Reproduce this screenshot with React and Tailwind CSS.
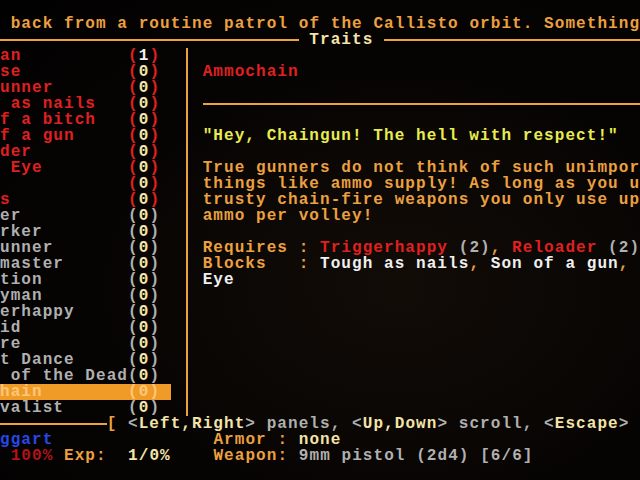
import React from "react";

const RED = "text-[#e02020]";
const ORANGE = "text-[#eca040]";
const CREAM = "text-[#f4e4a8]";
const GRAY = "text-[#b0b0b0]";
const WHITE = "text-[#f0f0f0]";

// visible part of each trait name (list is scrolled off the left edge)
const traits = [
  { name: "an", n: 1, red: true },
  { name: "se", n: 0, red: true },
  { name: "unner", n: 0, red: true },
  { name: " as nails", n: 0, red: true },
  { name: "f a bitch", n: 0, red: true },
  { name: "f a gun", n: 0, red: true },
  { name: "der", n: 0, red: true },
  { name: " Eye", n: 0, red: true },
  { name: "", n: 0, red: true },
  { name: "s", n: 0, red: true },
  { name: "er", n: 0 },
  { name: "rker", n: 0 },
  { name: "unner", n: 0 },
  { name: "master", n: 0 },
  { name: "tion", n: 0 },
  { name: "yman", n: 0 },
  { name: "erhappy", n: 0 },
  { name: "id", n: 0 },
  { name: "re", n: 0 },
  { name: "t Dance", n: 0 },
  { name: " of the Dead", n: 0 },
  { name: "hain", n: 0, active: true },
  { name: "valist", n: 0 },
];

const TraitRow = ({ t }) => {
  if (t.active) {
    return (
      <div className="h-4 bg-[#f09a28] text-[#fcc878]">
        {t.name.padEnd(12)}({t.n})
      </div>
    );
  }
  const c = t.red ? RED : GRAY;
  return (
    <div className="h-4">
      <span className={c}>{t.name.padEnd(12)}(</span>
      <span className={t.n === 1 ? WHITE : CREAM}>{t.n}</span>
      <span className={c}>)</span>
    </div>
  );
};

const HLine = ({ className }) => (
  <div className={`h-4 flex items-center ${className || ""}`}>
    <div className="h-[2px] w-full bg-[#eca040]" />
  </div>
);

export default function App() {
  return (
    <div className="w-[640px] h-[480px] overflow-hidden bg-[radial-gradient(ellipse_at_62%_60%,#120c07_0%,#060403_55%,#020101_100%)] font-['Liberation_Mono',monospace] font-bold text-[16px] leading-[16px] tracking-[1.067px] whitespace-pre flex flex-col">
      <div className="h-4" />
      <div className={`h-4 overflow-hidden ${ORANGE}`}> back from a routine patrol of the Callisto orbit. Something</div>

      {/* title bar */}
      <div className="h-4 flex items-center">
        <HLine className="w-[298.67px] shrink-0" />
        <span className={`shrink-0 ${CREAM}`}> Traits </span>
        <HLine className="flex-1" />
      </div>

      {/* panels */}
      <div className="h-[368px] flex">
        <div className="w-[170.67px] shrink-0 flex flex-col">
          {traits.map((t, i) => (
            <TraitRow key={i} t={t} />
          ))}
        </div>
        <div className="w-[32px] shrink-0 flex justify-center">
          <div className="w-[2px] h-full bg-[#eca040]" />
        </div>
        <div className="flex-1 min-w-0 overflow-hidden flex flex-col">
          <div className="h-4" />
          <div className={`h-4 ${RED}`}>Ammochain</div>
          <div className="h-4" />
          <HLine />
          <div className="h-4" />
          <div className="h-4 text-[#e8ec50]">"Hey, Chaingun! The hell with respect!"</div>
          <div className="h-4" />
          <div className={ORANGE}>
            <div className="h-4">True gunners do not think of such unimportant</div>
            <div className="h-4">things like ammo supply! As long as you use</div>
            <div className="h-4">trusty chain-fire weapons you only use up one</div>
            <div className="h-4">ammo per volley!</div>
          </div>
          <div className="h-4" />
          <div className="h-4">
            <span className={ORANGE}>Requires : </span>
            <span className={RED}>Triggerhappy</span>
            <span className={GRAY}> (2)</span>
            <span className={ORANGE}>, </span>
            <span className={RED}>Reloader</span>
            <span className={GRAY}> (2)</span>
          </div>
          <div className="h-4">
            <span className={ORANGE}>Blocks   : </span>
            <span className={WHITE}>Tough as nails</span>
            <span className={ORANGE}>, </span>
            <span className={WHITE}>Son of a gun</span>
            <span className={ORANGE}>, </span>
          </div>
          <div className={`h-4 ${WHITE}`}>Eye</div>
        </div>
      </div>

      {/* help line */}
      <div className="h-4 flex items-center overflow-hidden">
        <HLine className="w-[106.67px] shrink-0" />
        <span className={ORANGE}>[ </span>
        <span className={GRAY}>&lt;</span>
        <span className={CREAM}>Left,Right</span>
        <span className={GRAY}>&gt; panels, &lt;</span>
        <span className={CREAM}>Up,Down</span>
        <span className={GRAY}>&gt; scroll, &lt;</span>
        <span className={CREAM}>Escape</span>
        <span className={GRAY}>&gt;</span>
      </div>

      {/* status */}
      <div className="h-4">
        <span className="text-[#2848e8]">ggart</span>
        <span>{"               "}</span>
        <span className={ORANGE}>Armor : </span>
        <span className={CREAM}>none</span>
      </div>
      <div className="h-4">
        <span> </span>
        <span className="text-[#b01414]">100%</span>
        <span> </span>
        <span className={ORANGE}>Exp:</span>
        <span>  </span>
        <span className={CREAM}>1/0%</span>
        <span>{"    "}</span>
        <span className={ORANGE}>Weapon: </span>
        <span className={GRAY}>9mm pistol (2d4) [6/6]</span>
      </div>
      <div className="h-4" />
    </div>
  );
}
